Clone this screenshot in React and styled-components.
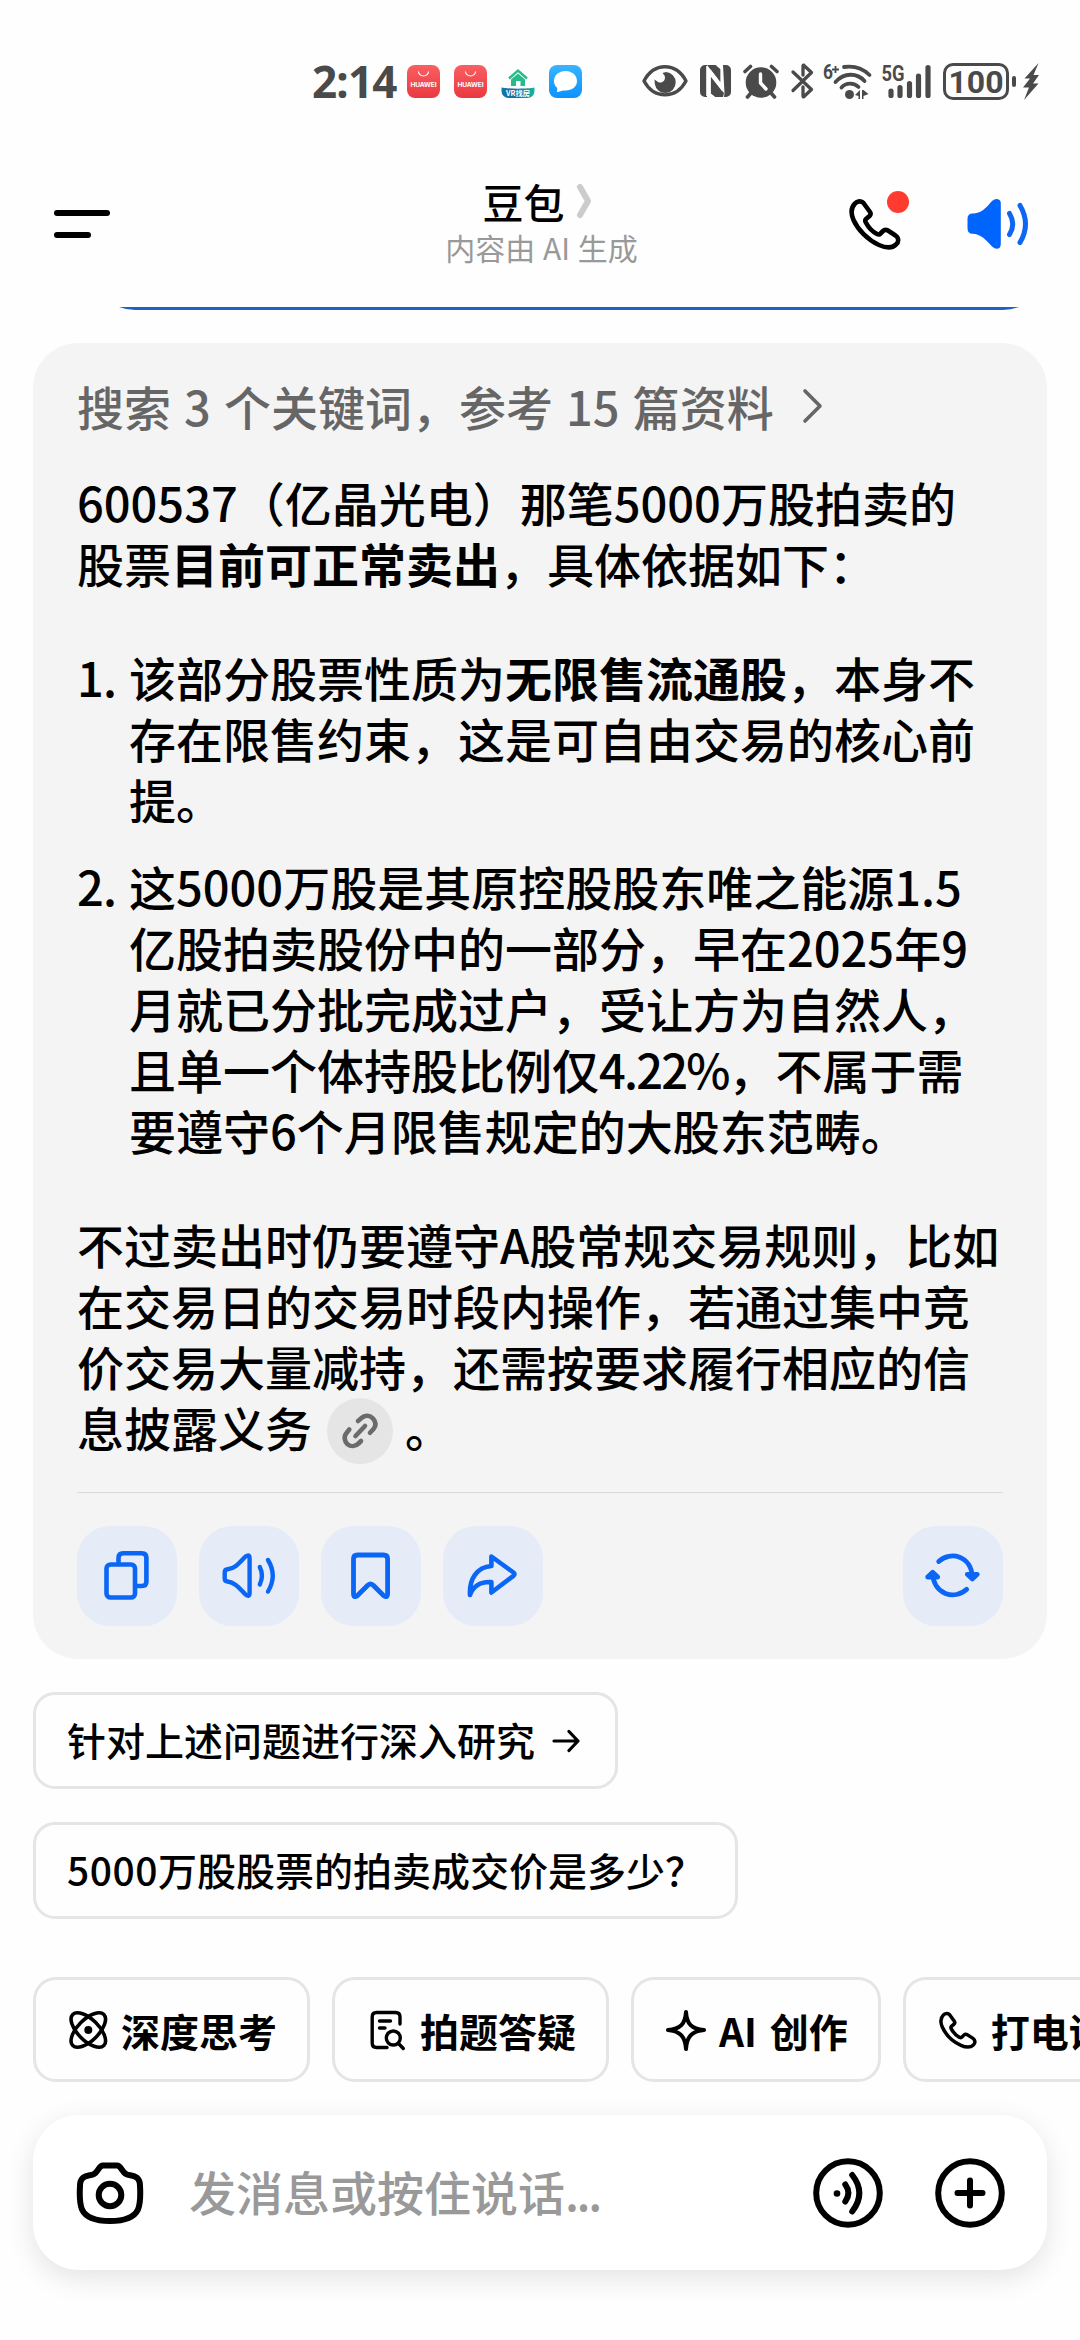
import React from "react";
import styled, { createGlobalStyle, css } from "styled-components";

const answer = {
  intro: [
    [{ num: "600537" }, "（亿晶光电）那笔", { num: "5000" }, "万股拍卖的"],
    ["股票", { strong: "目前可正常卖出" }, "，具体依据如下："],
  ],
  points: [
    [
      ["该部分股票性质为", { strong: "无限售流通股" }, "，本身不"],
      ["存在限售约束，这是可自由交易的核心前"],
      ["提。"],
    ],
    [
      ["这", { num: "5000" }, "万股是其原控股股东唯之能源", { num: "1.5" }],
      ["亿股拍卖股份中的一部分，早在", { num: "2025" }, "年", { num: "9" }],
      ["月就已分批完成过户，受让方为自然人，"],
      ["且单一个体持股比例仅", { num: "4.22%", tight: true }, "，不属于需"],
      ["要遵守", { num: "6" }, "个月限售规定的大股东范畴。"],
    ],
  ],
  outro: [
    ["不过卖出时仍要遵守", { num: "A" }, "股常规交易规则，比如"],
    ["在交易日的交易时段内操作，若通过集中竞"],
    ["价交易大量减持，还需按要求履行相应的信"],
  ],
};

function TextLine({ parts, children }) {
  return (
    <Line>
      {parts.map((part, i) => {
        if (typeof part === "string") return <span key={i}>{part}</span>;
        if (part.strong) return <strong key={i}>{part.strong}</strong>;
        return (
          <Num key={i} $tight={part.tight}>
            {part.num}
          </Num>
        );
      })}
      {children}
    </Line>
  );
}

function PhoneIcon({ size, stroke }) {
  return (
    <Svg width={size} height={size} viewBox="0 0 52 52" $stroke={stroke}>
      <path d="M6 5.5 C8 3 12.500 2.500 14.500 5 L21 14 C22 15.500 21.500 17 20.500 18 L17 21 C16 22 16 23 16.800 24.500 C19.500 29.500 23 33.500 28 36 C29.500 36.800 30.500 36.800 31.500 35.500 L34 33 C35.500 31.500 37 31.500 38.500 32.300 L46.500 37.500 C50 40 50 44 47 46.500 C43.500 50 37 50 30 47 C19 42 9 32 4.500 22 C1.500 15 2 9.500 6 5.500 Z" />
    </Svg>
  );
}

function HuaweiIcon() {
  return (
    <svg width="33" height="33" viewBox="0 0 33 33">
      <defs>
        <linearGradient id="hw" x1="0" y1="0" x2="0" y2="1">
          <stop offset="0" stopColor="#f95f62" />
          <stop offset="1" stopColor="#ea3940" />
        </linearGradient>
      </defs>
      <rect width="33" height="33" rx="8" fill="url(#hw)" />
      <path d="M11.500 6.500 a5 4.500 0 0 0 10 0" fill="none" stroke="#fff" strokeWidth="1.100" />
      <text x="16.500" y="21.500" fontSize="6.600" fontWeight="700" textAnchor="middle" textLength="26" fill="#fff" fontFamily="Inter, sans-serif">
        HUAWEI
      </text>
    </svg>
  );
}

function HouseIcon() {
  return (
    <svg width="34" height="33" viewBox="0 0 34 33">
      <defs>
        <linearGradient id="vr" x1="0" y1="0" x2="1" y2="0">
          <stop offset="0" stopColor="#1277a8" />
          <stop offset="0.450" stopColor="#146f9e" />
          <stop offset="1" stopColor="#13b8a0" />
        </linearGradient>
      </defs>
      <path d="M8 13.500 L17 5.500 L26 13.500" fill="none" stroke="#27bb8b" strokeWidth="2.400" />
      <path d="M10 14.500 L17 8.500 L24 14.500 V21 H19.500 V16 H15 V21 H10 Z" fill="#27bb8b" />
      <path d="M0.500 22.500 C7 24 27 24 33.500 22.500 V26 A7 7 0 0 1 26.500 33 H7.500 A7 7 0 0 1 0.500 26 Z" fill="url(#vr)" />
      <text x="17" y="31" fontSize="6.800" fontWeight="700" textAnchor="middle" textLength="24" lengthAdjust="spacingAndGlyphs" fill="#fff">
        VR找房
      </text>
    </svg>
  );
}

function MessageIcon() {
  return (
    <svg width="33" height="33" viewBox="0 0 33 33">
      <defs>
        <linearGradient id="msg" x1="0" y1="0" x2="0" y2="1">
          <stop offset="0" stopColor="#38b4ff" />
          <stop offset="1" stopColor="#0a92ff" />
        </linearGradient>
      </defs>
      <rect width="33" height="33" rx="8" fill="url(#msg)" />
      <path d="M16.500 6 C23 6 28 10.300 28 16 C28 21.700 23 25.500 16.500 25.500 C14.800 25.500 13.500 25.600 12.300 26 L8.800 27 C8 27.200 7.800 26.800 8 26 L8.300 23 C6 21.200 5 18.800 5 16 C5 10.300 10 6 16.500 6 Z" fill="#fff" />
    </svg>
  );
}

function StatusIcons() {
  return (
    <>
      <StatusSvg width="46" height="32" viewBox="0 0 46 32" $left={60}>
        <path d="M2 16 C12 -3 34 -3 44 16 C34 34.500 12 34.500 2 16 Z" fill="none" stroke="#4a4a4a" strokeWidth="3.400" strokeLinejoin="round" />
        <path d="M24 7 A10.500 10.500 0 1 1 12.800 19 L12.500 14.500 L16 17 C20 19 24.500 15 22.500 10.500 L20.500 8 Z" />
      </StatusSvg>
      <StatusSvg width="31" height="32" viewBox="0 0 31 32" $left={12}>
        <path d="M7 0 L20.500 17.500 V4 L17 0 H7 Z M7 0 H5 A5 5 0 0 0 0 5 V27 A5 5 0 0 0 5 32 H7 Z" />
        <path d="M23 0 H26 A5 5 0 0 1 31 5 V27 A5 5 0 0 1 26 32 H24 L24.500 28 Z M10.500 10.500 L24 28 L23 32 H14 L10.500 28.500 Z" />
        <path d="M7 1 V31 M10 9.500 V29 L14.500 32.500 M10.500 10 L23 26 M16.500 0 L21.500 4 V20 L10 5" stroke="#fff" strokeWidth="1.600" fill="none" />
      </StatusSvg>
      <StatusSvg width="36" height="36" viewBox="0 0 36 36" $left={12}>
        <circle cx="18" cy="19.500" r="15.300" />
        <path d="M2 8.500 L7.500 3.500 M34 8.500 L28.500 3.500 M8 30 L4.500 34 M28 30 L31.500 34" stroke="#4a4a4a" strokeWidth="3.600" strokeLinecap="round" />
        <path d="M17.500 11 V20 L23 26" fill="none" stroke="#fff" strokeWidth="3.400" strokeLinecap="round" strokeLinejoin="round" />
      </StatusSvg>
      <StatusSvg width="23" height="36" viewBox="0 0 23 36" $left={12}>
        <path d="M2 9 L20.500 26.500 L13 33.500 Q12 34.500 12 32.500 V24 M12 12 V3.500 Q12 1.500 13 2.500 L20.500 9.500 L2 27.500" fill="none" stroke="#4a4a4a" strokeWidth="3.300" strokeLinecap="round" strokeLinejoin="round" />
      </StatusSvg>
      <StatusSvg width="49" height="37" viewBox="0 0 49 37" $left={9}>
        <StatusLabel x="0" y="15.500" fontSize="20.500" textLength="10" lengthAdjust="spacingAndGlyphs">6</StatusLabel>
        <path d="M12.500 3 V10 M9 6.500 H16" stroke="#4a4a4a" strokeWidth="1.800" />
        <path d="M21 4 C31 2.500 40 5.500 46.500 12 M12.500 19 C21 9.500 34 9.500 41.500 18 M18.500 24.500 C23 19.500 31 19.500 35.500 24" fill="none" stroke="#4a4a4a" strokeWidth="3.800" strokeLinecap="round" />
        <circle cx="26.500" cy="31.500" r="4.500" />
        <path d="M37 27 V36 H35.500 V33 L32 32 Z M39 27 V36 H40.500 V33 L45.500 31 L40.500 27 Z" />
      </StatusSvg>
      <StatusSvg width="52" height="36" viewBox="0 0 52 36" $left={9}>
        <StatusLabel x="0.500" y="18" fontSize="22" textLength="23" lengthAdjust="spacingAndGlyphs">5G</StatusLabel>
        <path d="M10 28 V32.500 M19 24.500 V32.500 M28.500 20.500 V32.500 M37.500 13 V32.500 M47 4.500 V32.500" stroke="#4a4a4a" strokeWidth="5.200" strokeLinecap="round" />
      </StatusSvg>
      <Battery>100</Battery>
      <BatteryTip />
      <StatusSvg width="16" height="37" viewBox="0 0 16 37" $left={7}>
        <path d="M15.500 0 L1.500 15.500 H7 L0 24.500 H6 L1 37 L15.500 20.500 H10 L16 12 H10.500 Z" />
      </StatusSvg>
    </>
  );
}

export default function App() {
  return (
    <Page lang="zh-CN">
      <GlobalStyle />
      <StatusBar>
        <Clock>2:14</Clock>
        <Notifications>
          <HuaweiIcon />
          <HuaweiIcon />
          <HouseIcon />
          <MessageIcon />
        </Notifications>
        <StatusIcons />
      </StatusBar>

      <Header>
        <MenuButton>
          <MenuBar $width={56} />
          <MenuBar $width={37} />
        </MenuButton>
        <TitleBox>
          <Title>
            豆包
            <svg width="16" height="36" viewBox="0 0 16 36">
              <path d="M4 4 L12 18 L4 32" fill="none" stroke="#ccc" strokeWidth="6" strokeLinecap="round" strokeLinejoin="round" />
            </svg>
          </Title>
          <Subtitle>内容由 AI 生成</Subtitle>
        </TitleBox>
        <HeaderActions>
          <CallButton>
            <PhoneIcon size={52} stroke={4.6} />
            <RedDot />
          </CallButton>
          <svg width="62" height="52" viewBox="0 0 62 52">
            <path d="M0.500 21 Q0.500 15.500 5.500 15.500 C14 15.500 19 10 25 3 Q29 -0.500 32.500 2 Q33.800 3 33.800 5 V46 Q33.800 48.500 32.500 50 Q29 52 25 48.500 C19 42 14 36 5.500 35.800 Q0.500 35.800 0.500 30 Z" fill="#0065ff" />
            <path d="M42.500 15.500 Q49 26 42.500 36.500 M53 7.500 Q64 26 53 44.500" fill="none" stroke="#0f66f0" strokeWidth="5" strokeLinecap="round" />
          </svg>
        </HeaderActions>
      </Header>

      <BubbleClip>
        <Bubble />
      </BubbleClip>

      <Card>
        <Sources>
          搜索 3 个关键词，参考 15 篇资料
          <svg width="22" height="36" viewBox="0 0 22 36">
            <path d="M3 3 L18 18 L3 33" fill="none" stroke="#666" strokeWidth="3.600" strokeLinecap="round" strokeLinejoin="round" />
          </svg>
        </Sources>
        {answer.intro.map((parts, i) => (
          <TextLine key={i} parts={parts} />
        ))}
        <List>
          {answer.points.map((lines, i) => (
            <Item key={i}>
              <Marker>{i + 1}.</Marker>
              <div>
                {lines.map((parts, j) => (
                  <TextLine key={j} parts={parts} />
                ))}
              </div>
            </Item>
          ))}
        </List>
        {answer.outro.map((parts, i) => (
          <TextLine key={i} parts={parts} />
        ))}
        <TextLine parts={["息披露义务"]}>
          <LinkBadge>
            <Svg width="66" height="66" viewBox="0 0 66 66" $stroke={4.6} $color="#6b6b6b">
              <path d="M31 23 L34.500 20 C38 16.500 43 17.200 46 20.500 C49 24 49 28 46.500 31 L43 34.800 M22.300 31.500 L19.500 35 C16.500 38.500 17.500 43.500 20.500 46.200 C24 49 28.500 48.500 31.500 45.500 L34 43 M28.500 38 L38 28" />
            </Svg>
          </LinkBadge>
          <span>。</span>
        </TextLine>
        <Divider />
        <Actions>
          <ActionButton>
            <Svg width="100" height="100" viewBox="0 0 100 100" $stroke={4.6} $color="#0b66f5">
              <rect x="29.500" y="38.500" width="28.500" height="33" rx="4" />
              <path d="M41.500 38 V32 Q41.500 27.200 46 27.200 H65 Q69.400 27.200 69.400 32 V55.500 Q69.400 60 65 60 H58.500" />
            </Svg>
          </ActionButton>
          <ActionButton>
            <Svg width="100" height="100" viewBox="0 0 100 100" $stroke={4.4} $color="#0b66f5">
              <path d="M25.700 46.500 Q25.700 43.500 28.500 43.300 C36.500 42.500 41 36 46.500 30.500 Q50.600 27.500 50.600 32.500 V67 Q50.600 71.500 46.500 68.500 C41 63 36.500 56.300 28.500 55.500 Q25.700 55.300 25.700 52.500 Z" />
              <path d="M60.800 41 Q65 49.500 60.800 58.500 M69 34 Q78.500 49.500 69 65.500" />
            </Svg>
          </ActionButton>
          <ActionButton>
            <Svg width="100" height="100" viewBox="0 0 100 100" $stroke={4.8} $color="#0b66f5">
              <path d="M32.500 33 Q32.500 29 36.500 29 H62.500 Q66.600 29 66.600 33 V67.500 Q66.600 72.500 62.500 69.500 L52 59 Q49.500 57 47 59 L36.500 69.500 Q32.500 72.500 32.500 67.500 Z" />
            </Svg>
          </ActionButton>
          <ActionButton>
            <Svg width="100" height="100" viewBox="0 0 100 100" $stroke={4.6} $color="#0b66f5">
              <path d="M48.400 30.500 L70.500 46.500 Q72.500 48 70.500 49.800 L48.400 66.500 V56 C38 55.500 30.500 59 27 69 C26 53 34 41 48.400 40 Z" />
            </Svg>
          </ActionButton>
          <ActionButton $last>
            <Svg width="100" height="100" viewBox="0 0 100 100" $stroke={4.8} $color="#0b66f5">
              <path d="M35.700 35.500 C47 24.500 69 29.500 69.300 52 M63.700 63.300 C52 74.500 30 68.500 29.700 47" />
              <path d="M64.300 48.300 L69.300 53 L74.300 48.300 Z M24.700 51 L29.700 46.300 L34.700 51 Z" fill="#0b66f5" />
            </Svg>
          </ActionButton>
        </Actions>
      </Card>

      <Suggestions>
        <Suggestion>
          <SuggestionText>针对上述问题进行深入研究</SuggestionText>
          <ArrowSvg width="28" height="24" viewBox="0 0 28 24" $stroke={3.2}>
            <path d="M2 12 H25.500 M17 2.500 L26 12 L17 21.500" />
          </ArrowSvg>
        </Suggestion>
        <Suggestion>
          <SuggestionText>
            <SmallNum>5000</SmallNum>万股股票的拍卖成交价是多少？
          </SuggestionText>
        </Suggestion>
      </Suggestions>

      <Chips>
        <Chip>
          <Svg width="44" height="44" viewBox="0 0 44 44" $stroke={3.6}>
            <ellipse cx="22.300" cy="22" rx="22" ry="10.500" transform="rotate(45 22.300 22)" />
            <ellipse cx="22.300" cy="22" rx="22" ry="10.500" transform="rotate(-45 22.300 22)" />
            <circle cx="22.300" cy="22" r="2.200" fill="#000" />
          </Svg>
          深度思考
        </Chip>
        <Chip>
          <Svg width="44" height="44" viewBox="0 0 44 44" $stroke={3.4}>
            <path d="M35 16 V9 Q35 4.500 30.500 4.500 H11.500 Q7.200 4.500 7.200 9 V35 Q7.200 39.500 11.500 39.500 H22 M14.500 13 H25.500 M14.500 20 H20" />
            <circle cx="28.300" cy="30" r="7" />
            <path d="M33.500 35.500 L38.300 40.500" />
          </Svg>
          拍题答疑
        </Chip>
        <Chip>
          <Svg width="44" height="44" viewBox="0 0 44 44" $stroke={4}>
            <path d="M22 4 C22.800 16 27.500 21 40 22 C27.500 23 22.800 29 22 41 C21.200 29 16.500 23 4 22 C16.500 21 21.200 16 22 4 Z" />
          </Svg>
          AI 创作
        </Chip>
        <Chip>
          <IconPad>
            <PhoneIcon size={38} stroke={4.8} />
          </IconPad>
          打电话
        </Chip>
      </Chips>

      <InputBar>
        <Svg width="68" height="64" viewBox="0 0 68 64" $stroke={6}>
          <path d="M27 4.500 H41 C45 4.500 46 11 50 13 C54 15.500 64 12.500 64 25 C64.500 33 64.500 42 62 48.500 C58 57 48 60 34 60 C20 60 10 57 6 48.500 C3.500 42 3.500 33 4 25 C4 12.500 14 15.500 18 13 C22 11 23 4.500 27 4.500 Z" />
          <circle cx="34" cy="34" r="11.300" />
        </Svg>
        <Placeholder>
          发消息或按住说话<Dots>...</Dots>
        </Placeholder>
        <Svg width="70" height="70" viewBox="0 0 70 70" $stroke={6}>
          <circle cx="35" cy="35" r="31.800" />
          <path d="M32.300 26.500 Q38.500 35 32.300 43.500 M39.200 17 Q53.500 35 39.200 53.500" />
          <circle cx="24" cy="35.500" r="3.300" fill="#000" stroke="none" />
        </Svg>
        <PlusSvg width="70" height="70" viewBox="0 0 70 70" $stroke={6}>
          <circle cx="35" cy="35" r="31.800" />
          <path d="M35 22.500 V47.500 M22.500 35 H47.500" />
        </PlusSvg>
      </InputBar>
    </Page>
  );
}

const GlobalStyle = createGlobalStyle`
  * {
    box-sizing: border-box;
  }
  body {
    margin: 0;
    background: #fefefe;
    overflow: hidden;
  }
  svg {
    display: block;
    flex-shrink: 0;
  }
`;

const Page = styled.div`
  width: 1080px;
  height: 2340px;
  overflow: hidden;
  background: #fefefe;
  color: #000;
  font-family: "Noto Sans CJK SC", sans-serif;
  font-weight: 500;
`;
const Svg = styled.svg`
  fill: none;
  stroke: ${({ $color }) => $color || "#000"};
  stroke-width: ${({ $stroke }) => $stroke}px;
  stroke-linecap: round;
  stroke-linejoin: round;
`;

const StatusBar = styled.div`
  display: flex;
  align-items: center;
  height: 162px;
  padding-left: 312px;
  color: #4a4a4a;
`;
const Clock = styled.div`
  width: 95px;
  font-family: "Noto Sans", sans-serif;
  font-weight: 700;
  font-size: 44px;
  line-height: 50px;
  letter-spacing: -0.8px;
`;
const Notifications = styled.div`
  display: flex;
  gap: 14px;
`;
const StatusSvg = styled.svg`
  margin-left: ${({ $left }) => $left}px;
  fill: #4a4a4a;
  overflow: visible;
`;
const StatusLabel = styled.text`
  font-family: Roboto, sans-serif;
  font-weight: 700;
`;
const Battery = styled.div`
  width: 66px;
  height: 37px;
  margin-left: 10px;
  border: 3px solid #4a4a4a;
  border-radius: 10px;
  font-family: Roboto, sans-serif;
  font-weight: 700;
  font-size: 32px;
  line-height: 32px;
  text-align: center;
`;
const BatteryTip = styled.div`
  width: 4px;
  height: 11px;
  margin-left: 3px;
  border-radius: 2px;
  background: #4a4a4a;
`;

const Header = styled.div`
  display: grid;
  grid-template-columns: 1fr auto 1fr;
  align-items: center;
  height: 124px;
  margin-bottom: 21px;
  padding: 0 51px 0 54px;
`;
const MenuButton = styled.div`
  display: flex;
  flex-direction: column;
  gap: 16px;
`;
const MenuBar = styled.div`
  width: ${({ $width }) => $width}px;
  height: 6px;
  border-radius: 3px;
  background: #000;
`;
const TitleBox = styled.div`
  display: flex;
  flex-direction: column;
  align-items: center;
`;
const Title = styled.div`
  display: flex;
  align-items: center;
  gap: 12px;
  padding-right: 8px;
  font-size: 41px;
  line-height: 46px;
`;
const Subtitle = styled.div`
  font-size: 30px;
  font-weight: 400;
  line-height: 46px;
  word-spacing: 1px;
  color: #999;
`;
const HeaderActions = styled.div`
  display: flex;
  justify-content: flex-end;
  gap: 66px;
`;
const CallButton = styled.div`
  position: relative;
`;
const RedDot = styled.div`
  position: absolute;
  top: -7px;
  right: -8px;
  width: 22px;
  height: 22px;
  border-radius: 50%;
  background: #ff3b30;
`;

/* only the bottom edge of the question bubble is scrolled into view */
const BubbleClip = styled.div`
  display: flex;
  align-items: flex-end;
  height: 3px;
  margin: 0 33px 33px 91px;
  overflow: hidden;
`;
const Bubble = styled.div`
  flex: 1;
  height: 120px;
  border-radius: 44px;
  background: #1b62cd;
`;

const Card = styled.div`
  margin: 0 33px;
  padding: 32px 44px 33px;
  border-radius: 45px;
  background: #f4f4f4;
  font-size: 47px;
  line-height: 61px;
`;
const Sources = styled.div`
  display: flex;
  align-items: center;
  gap: 28px;
  margin-bottom: 35px;
  color: #666;
  white-space: nowrap;
  word-spacing: 2.5px;
`;
const Line = styled.div`
  height: 61px;
  white-space: nowrap;
  strong {
    font-weight: 700;
  }
`;
const Num = styled.span`
  letter-spacing: ${({ $tight }) => ($tight ? "-1.8px" : "0")};
`;
const List = styled.div`
  display: flex;
  flex-direction: column;
  gap: 26px;
  margin: 53px 0;
`;
const Item = styled.div`
  display: flex;
`;
const Marker = styled.div`
  width: 52px;
  letter-spacing: -0.8px;
`;
const LinkBadge = styled.span`
  display: inline-block;
  width: 66px;
  height: 66px;
  margin: -10px 12px -10px 15px;
  border-radius: 50%;
  background: #e5e5e5;
  vertical-align: -7px;
`;
const Divider = styled.div`
  height: 1px;
  margin: 35px 0 33px;
  background: #d9d9d9;
`;
const Actions = styled.div`
  display: flex;
  gap: 22px;
`;
const ActionButton = styled.div`
  width: 100px;
  height: 100px;
  border-radius: 33px;
  background: #e5ecf7;
  ${({ $last }) =>
    $last &&
    css`
      margin-left: auto;
    `}
`;

const Suggestions = styled.div`
  display: flex;
  flex-direction: column;
  align-items: flex-start;
  gap: 33px;
  margin: 33px 33px 58px;
`;
const Suggestion = styled.div`
  display: flex;
  align-items: center;
  gap: 17px;
  height: 97px;
  padding: 0 31px;
  border: 3px solid #e5e5e5;
  border-radius: 22px;
  font-size: 39px;
  white-space: nowrap;
`;
const SuggestionText = styled.span`
  padding-bottom: 3px;
`;
const SmallNum = styled.span`
  letter-spacing: 0.5px;
`;
const ArrowSvg = styled(Svg)`
  margin-right: 4px;
`;

const Chips = styled.div`
  display: flex;
  gap: 22px;
  margin: 0 0 33px 33px;
  overflow: hidden;
`;
const Chip = styled.div`
  display: flex;
  flex-shrink: 0;
  align-items: center;
  gap: 11px;
  height: 105px;
  padding: 0 30px;
  border: 3px solid #e5e5e5;
  border-radius: 23px;
  font-size: 39px;
  font-weight: 700;
  white-space: nowrap;
  word-spacing: 4px;
`;
const IconPad = styled.div`
  padding: 3px;
`;

const InputBar = styled.div`
  display: flex;
  align-items: center;
  height: 155px;
  margin: 0 33px;
  padding: 0 42px 0 43px;
  border-radius: 46px;
  background: #fff;
  box-shadow: 0 8px 28px rgba(0, 0, 0, 0.11);
`;
const Placeholder = styled.div`
  flex: 1;
  margin-left: 45px;
  padding-bottom: 4px;
  font-size: 47px;
  line-height: 60px;
  color: #999;
`;
const Dots = styled.span`
  letter-spacing: -2.4px;
`;
const PlusSvg = styled(Svg)`
  margin-left: 52px;
`;
